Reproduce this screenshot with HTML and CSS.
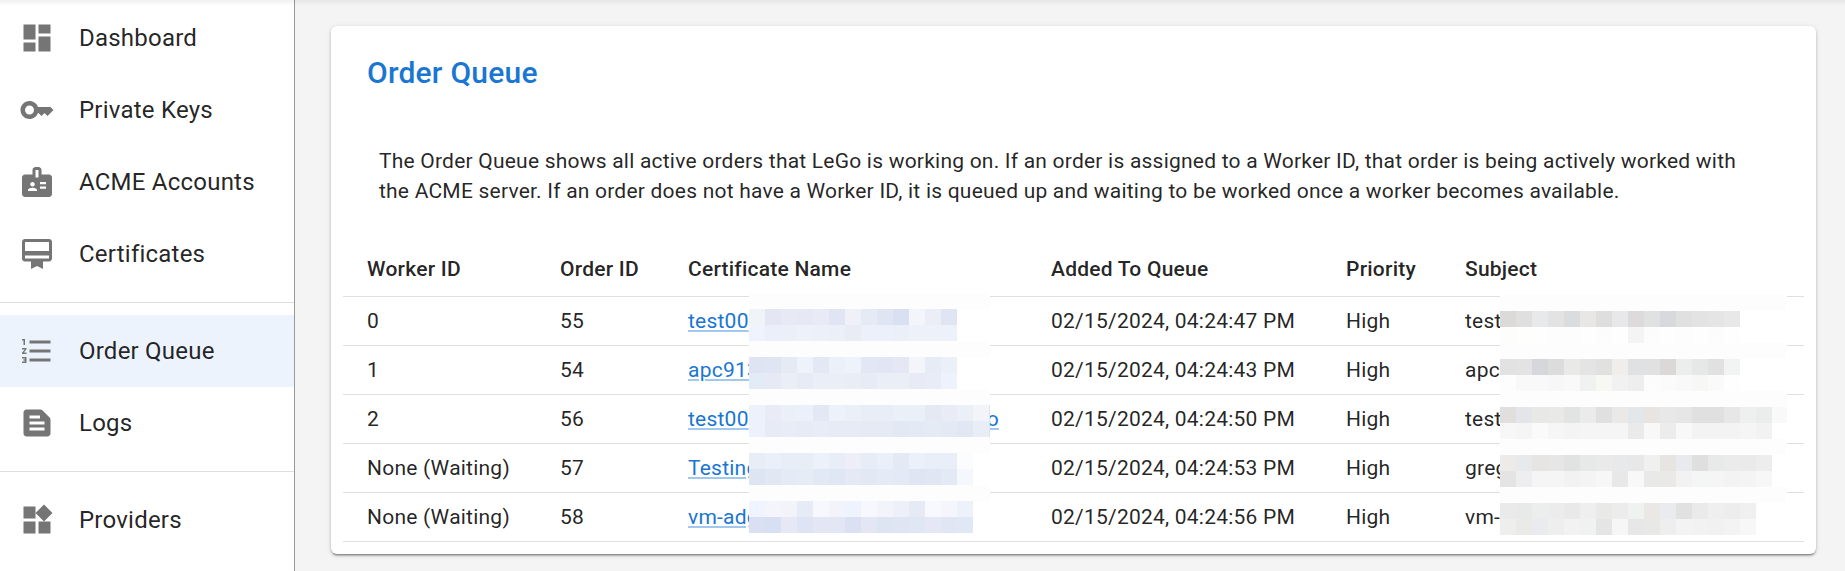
FILE: index.html
```html
<!DOCTYPE html>
<html lang="en">
<head>
<meta charset="utf-8">
<title>Order Queue</title>
<link rel="stylesheet" href="styles.css">
</head>
<body>
<div class="app">
  <nav class="sidebar">
    <a class="nav-item"><svg class="icon" viewBox="0 0 24 24"><path d="M3 13h8V3H3v10zm0 8h8v-6H3v6zm10 0h8V11h-8v10zm0-18v6h8V3h-8z"/></svg><span>Dashboard</span></a>
    <a class="nav-item"><svg class="icon" viewBox="0 0 24 24"><path d="M21 10h-8.35C11.83 7.67 9.61 6 7 6c-3.31 0-6 2.69-6 6s2.69 6 6 6c2.61 0 4.83-1.67 5.65-4H13l2 2 2-2 2 2 4-4.04L21 10zM7 15c-1.65 0-3-1.35-3-3s1.35-3 3-3 3 1.35 3 3-1.35 3-3 3z"/></svg><span>Private Keys</span></a>
    <a class="nav-item"><svg class="icon" viewBox="0 0 24 24"><path d="M20 7h-5V4c0-1.1-.9-2-2-2h-2c-1.1 0-2 .9-2 2v3H4c-1.1 0-2 .9-2 2v11c0 1.1.9 2 2 2h16c1.1 0 2-.9 2-2V9c0-1.1-.9-2-2-2zM9 12c.83 0 1.5.67 1.5 1.5S9.83 15 9 15s-1.5-.67-1.5-1.5S8.17 12 9 12zm3 6H6v-.75c0-1 2-1.5 3-1.5s3 .5 3 1.5V18zm1-9h-2V4h2v5zm5 7.5h-4V15h4v1.5zm0-3h-4V12h4v1.5z"/></svg><span>ACME Accounts</span></a>
    <a class="nav-item"><svg class="icon" viewBox="0 0 24 24"><path d="M20 2H4c-1.11 0-2 .89-2 2v11c0 1.11.89 2 2 2h4v5l4-2 4 2v-5h4c1.11 0 2-.89 2-2V4c0-1.11-.89-2-2-2zm0 13H4v-2h16v2zm0-5H4V4h16v6z"/></svg><span>Certificates</span></a>
    <hr class="divider">
    <a class="nav-item selected"><svg class="icon" viewBox="0 0 24 24"><path d="M2 17h2v.5H3v1h1v.5H2v1h3v-4H2v1zm1-9h1V4H2v1h1v3zm-1 3h1.8L2 13.1v.9h3v-1H3.2L5 10.9V10H2v1zm5-6v2h14V5H7zm0 14h14v-2H7v2zm0-6h14v-2H7v2z"/></svg><span>Order Queue</span></a>
    <a class="nav-item"><svg class="icon" viewBox="0 0 24 24"><path d="M20.41 8.41l-4.83-4.83c-.37-.37-.88-.58-1.41-.58H5c-1.1 0-2 .9-2 2v14c0 1.1.9 2 2 2h14c1.1 0 2-.9 2-2V9.83c0-.53-.21-1.04-.59-1.42zM7 7h7v2H7V7zm10 10H7v-2h10v2zm0-4H7v-2h10v2z"/></svg><span>Logs</span></a>
    <hr class="divider">
    <a class="nav-item"><svg class="icon" viewBox="0 0 24 24"><path d="M13 13v8h8v-8h-8zM3 21h8v-8H3v8zM3 3v8h8V3H3zm13.66-1.31L11 7.34 16.66 13l5.66-5.66-5.66-5.65z"/></svg><span>Providers</span></a>
  </nav>
  <main class="content">
    <section class="card">
      <h1 class="title">Order Queue</h1>
      <p class="intro">The Order Queue shows all active orders that LeGo is working on. If an order is assigned to a Worker ID, that order is being actively worked with the ACME server. If an order does not have a Worker ID, it is queued up and waiting to be worked once a worker becomes available.</p>
      <div class="table-wrap">
        <table class="orders">
          <colgroup><col class="c-worker"><col class="c-order"><col class="c-cert"><col class="c-added"><col class="c-priority"><col class="c-subject"></colgroup>
          <thead><tr><th>Worker ID</th><th>Order ID</th><th>Certificate Name</th><th>Added To Queue</th><th>Priority</th><th>Subject</th></tr></thead>
          <tbody>
            <tr><td>0</td><td>55</td><td><a class="link">test00</a></td><td>02/15/2024, 04:24:47 PM</td><td>High</td><td>test</td></tr>
            <tr><td>1</td><td>54</td><td><a class="link">apc913</a></td><td>02/15/2024, 04:24:43 PM</td><td>High</td><td>apc</td></tr>
            <tr><td>2</td><td>56</td><td><a class="link">test00</a><a class="link tail">o</a></td><td>02/15/2024, 04:24:50 PM</td><td>High</td><td>test</td></tr>
            <tr><td>None (Waiting)</td><td>57</td><td><a class="link">Testing</a></td><td>02/15/2024, 04:24:53 PM</td><td>High</td><td>greg</td></tr>
            <tr><td>None (Waiting)</td><td>58</td><td><a class="link">vm-adg</a></td><td>02/15/2024, 04:24:56 PM</td><td>High</td><td>vm-</td></tr>
          </tbody>
        </table>
        <div class="mosaic mosaic-cert" id="mosaic-cert"></div>
        <div class="mosaic mosaic-subject" id="mosaic-subject"></div>
      </div>
    </section>
  </main>
</div>
<div class="top-shadow"></div>
<script src="mosaic.js"></script>
</body>
</html>
```
FILE: styles.css
```css
* { box-sizing: border-box; }
body {
  margin: 0;
  background: #f4f4f4;
  color: rgba(0, 0, 0, 0.87);
  font-family: Roboto, "Liberation Sans", sans-serif;
  overflow: hidden;
}
.app { display: flex; height: 571px; }
.sidebar {
  width: 295px;
  flex: none;
  padding-top: 2px;
  background: #fff;
  border-right: 1px solid #999;
}
.nav-item {
  display: flex;
  align-items: center;
  gap: 24px;
  height: 72px;
  padding-left: 19px;
  font-size: 24px;
  letter-spacing: 0.00938em;
}
.nav-item.selected { background: #ecf3fc; }
.icon { width: 36px; height: 36px; flex: none; fill: #757575; }
.divider { height: 1px; margin: 12px 0; border: 0; background: #dfdfdf; }
.content { flex: 1; padding: 26px 29px 0 36px; }
.card {
  height: 528px;
  padding: 12px;
  background: #fff;
  border-radius: 6px;
  box-shadow: 0 3px 1px -2px rgba(0, 0, 0, 0.2), 0 2px 2px rgba(0, 0, 0, 0.22), 0 1px 5px rgba(0, 0, 0, 0.14);
}
.title {
  margin: 11px 24px 0;
  font-size: 30px;
  font-weight: 500;
  line-height: 48px;
  letter-spacing: 0.0075em;
  color: #1976d2;
}
.intro {
  margin: 49px 36px 0;
  font-size: 21px;
  line-height: 30px;
  letter-spacing: 0.0104em;
}
.table-wrap { position: relative; margin-top: 35px; }
.orders {
  width: 1461px;
  table-layout: fixed;
  border-collapse: separate;
  border-spacing: 0;
  font-size: 21px;
  line-height: 30px;
  letter-spacing: 0.01071em;
}
.c-worker { width: 193px; }
.c-order { width: 128px; }
.c-cert { width: 363px; }
.c-added { width: 295px; }
.c-priority { width: 119px; }
.c-subject { width: 363px; }
th, td {
  height: 49px;
  padding: 0 24px;
  text-align: left;
  white-space: nowrap;
  border-bottom: 1px solid #e0e0e0;
}
th { height: 56px; font-weight: 500; }
.link {
  color: #1976d2;
  text-decoration: underline;
  text-decoration-color: rgba(25, 118, 210, 0.4);
  text-decoration-thickness: 2px;
  text-underline-offset: 2px;
}
.tail { margin-left: 238px; }
/* Pixelated redaction laid over the table */
.mosaic {
  position: absolute;
  display: grid;
  grid-auto-rows: 16px;
  background: #fff;
  overflow: hidden;
}
.mosaic-cert { left: 406px; top: 52px; width: 241px; height: 240px; grid-template-columns: repeat(16, 16px); }
.mosaic-subject { left: 1157px; top: 54px; width: 287px; height: 240px; grid-template-columns: repeat(18, 16px); }
.top-shadow {
  position: absolute;
  inset: 0 0 auto 0;
  height: 6px;
  background: linear-gradient(rgba(0, 0, 0, 0.06), rgba(0, 0, 0, 0));
}
```
FILE: mosaic.js
```js
const certRows = [
  "strip",
  "f0f3f8 e4e6f4 e7e9f5 e6e9f5 e8ebf6 e1e4f3 f0f1f8 e6eaf5 dfe5f3 d9e0f1 f4f5fa ebeef7 dfe5f3",
  "eff3fd eaeff9 ebeff8 edf1fa ebf0f9 ebeff8 e9ecf5 ebf0fa ebf0fa eaeff8 ecf1fa ecf1fa ecf1fa",
  "strip",
  "dee4f1 e0e5f3 e6eaf5 edf2fb e4e8f4 ebf0f9 edf2fb e3e7f4 e2e6f4 e5e8f4 f4f5fa e7ebf6 ebeff8",
  "e3ebf6 e7eaf5 eaeef7 e7ebf6 e9eef7 eaeef7 e9edf6 e7ebf6 e9eef7 eaeef7 e8ebf6 e8ecf6 edf2fc",
  "strip",
  "edf1fb e9ecf6 ebeff8 ecf0fa e4e8f4 edf1fa ebeff8 e9edf6 e9edf7 ebeff8 ebeff8 e5e9f4 e9ecf6 ebeff8 f3f3fa e2e3f1",
  "edf1fb e7ebf6 e8ecf6 e7ebf6 e8ecf7 e7ebf6 e7ebf6 e5eaf5 e5eaf5 e2e9f5 e3e9f5 e4ebf5 e3eaf5 e1e7f3 e9edf6 dfe2f0",
  "strip",
  "e8edf6 ebeff9 e9edf7 e8edf6 edf1fa e9edf7 edeef7 e8ecf6 ebeff9 e5e9f5 ecf0fa eaeef8 eaeef8 fafcfe",
  "dee5f2 e1e8f4 e4ebf6 e5ecf6 e2e9f5 dfe6f4 e5e9f5 e2e9f4 e5ebf6 e3e9f5 dfe5f2 e0e6f3 e3e9f5 f4f8fd",
  "strip",
  "f0f4fe f4f5fb f3f4f9 e7ebf5 f7f8fd f3f4fb eff3fd f7f8fd f2f4fa edf0f9 e6eaf4 f8f9fe f4f6fb edf1f9",
  "dadff1 d7e0f2 e6e9f5 dee4f3 e5e6f3 e3e6f4 dbe1f2 e4e6f3 dde4f2 e0e5f4 dfe6f4 e5e8f4 e0e6f4 e0e7f5",
];
const subjectRows = [
  "strip",
  "dcdad9 dfdfdf e8e9eb e3e3e3 dadcde e9e7e5 dededf e8e8ea dcdadb e0e2e1 d7d9dc e0e0e0 e3e3e3 e5e5e5 e8e8e8",
  "fdfdfc fefefd fefefe fdfdfd fdfdfd fefefe fcfcfc fefefe f4f4f4 fcfcfc fefefe fdfdfd fefefe fcfcfc fefefe",
  "strip",
  "e2e2e2 e3e3e3 d6d7da dcdcdc e9e9e7 e4e4e4 e1e1df f0eeec dfe1e3 e1e1e1 dbd9d7 eceeed e6e8e7 e1e1e1 f1f4f3",
  "fdfdfd f9f9f9 f9f9f9 f7f7f7 f9f9f9 eff2f0 f7f7f4 f1f1f2 eeeeef fcfcfc fbfbfb f9f9f9 f7f7f5 fafafa fefefe",
  "strip",
  "e1dfdd e3e5e8 e8e8e7 e9e9e8 e1e4e2 ebebeb e0e0e0 ebe9e7 e4e7ea e7e4e2 e8e8e8 e6e6e6 e0e0e0 e0e0e0 e7e7e7 eeefef ebedec f9f9f9",
  "f7f7f7 f5f5f5 fafafa f6f6f6 f4f4f4 f5f5f5 f5f5f5 f5f5f5 eaeaea f8f8f8 ececec f8f8f8 f3f3f3 f3f3f3 f3f3f3 f5f5f5 f2f2f2 ffffff",
  "strip",
  "edebe9 e7e9eb e7e5e3 e6e6e6 e1e3e2 e7e9e8 eaeaea e7e9ea e8e8e8 f0f0f0 e7e5e2 e8eaed dfdfdf e7eae8 ebebeb eaeaea ededed",
  "e4e4e4 eeeef0 f5f5f5 f5f5f5 f2f2f2 f4f4f4 f7f7f7 e8e8e8 f8f8f8 e9e9e8 ebe9e7 f2f2f2 f4f6f5 f5f5f5 f3f3f3 f4f4f4 f7f7f7",
  "strip",
  "eaeaea e8eae9 eceeed ececec e9e9e9 efefef e9e9e7 ececec eff2f1 eae8e5 e9ebee e1e1e1 eaeaea efefef ededed f0f0f0",
  "eeeeec eaeae7 e9ebee eeeeee f2f2f2 f0f2f1 e5e5e5 f6f6f6 e7e7e7 e8e8e6 eeeeee f3f3f3 f2f2f2 f1f1f1 f3f3f3 f7f7f7",
];

function paint(id, rows, columns) {
  const target = document.getElementById(id);
  for (const row of rows) {
    const colors = row === "strip" ? Array(columns).fill("fdfdfd") : row.split(" ");
    for (let i = 0; i < columns; i++) {
      const cell = document.createElement("span");
      cell.style.backgroundColor = "#" + (colors[i] || "ffffff");
      target.appendChild(cell);
    }
  }
}

paint("mosaic-cert", certRows, 16);
paint("mosaic-subject", subjectRows, 18);
```
